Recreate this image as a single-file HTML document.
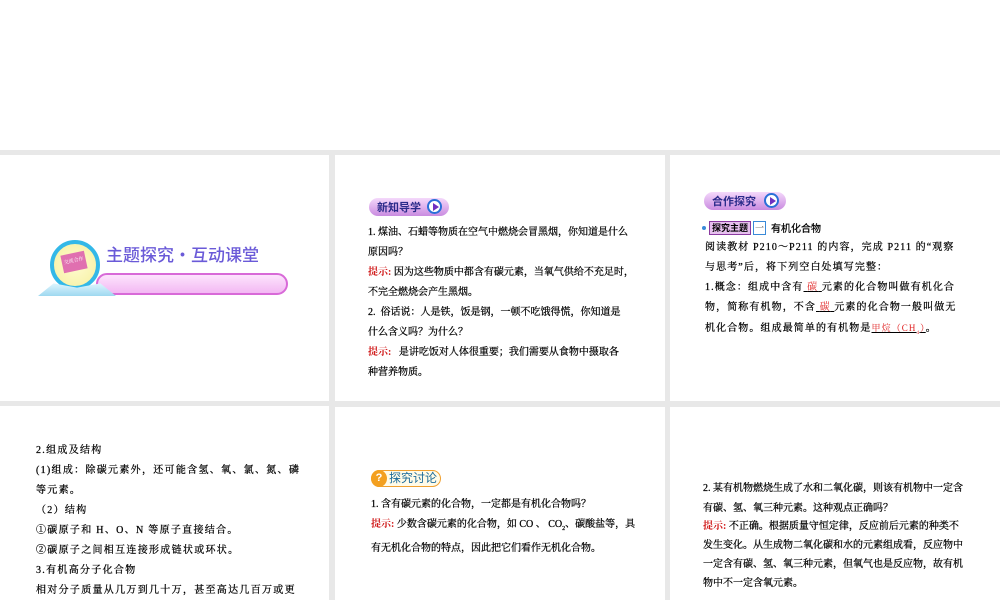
<!DOCTYPE html>
<html><head><meta charset="utf-8"><style>
*{margin:0;padding:0;box-sizing:border-box}
body{width:1000px;height:600px;overflow:hidden;background:#fff;font-family:"Liberation Serif","Noto Serif CJK SC","Noto Sans CJK SC",serif;color:#000;position:relative}
.band{position:absolute;left:0;top:150px;width:1000px;height:450px;background:#e8e8e8}
.s{position:absolute;background:#fff;overflow:hidden}
.t{position:absolute;font-size:10px;line-height:20px;white-space:nowrap;-webkit-text-stroke:0.25px #000}
.r{color:#d01818;font-weight:bold;-webkit-text-stroke:0}
.red{color:#e02020;-webkit-text-stroke:0}
.hdr{position:absolute;height:18px;border-radius:9px;background:linear-gradient(#f4d8fb,#c98be0);font-family:"Noto Sans CJK SC",sans-serif;font-weight:bold;font-size:11px;line-height:18px;color:#2a2a8a;padding-left:8px}
.play{position:absolute;width:15px;height:15px;border-radius:50%;border:2px solid #2a6fd8;background:#fff;top:1px}
.play:after{content:"";position:absolute;left:4px;top:2px;border-left:6px solid #7030c0;border-top:4px solid transparent;border-bottom:4px solid transparent}
</style></head><body>
<div class="band"></div>

<div class="s" style="left:0;top:155px;width:329px;height:246px">
  <div style="position:absolute;left:96px;top:118px;width:192px;height:22px;border-radius:11px;border:2px solid #d86ad8;background:linear-gradient(#fde4fd,#f3b8f3)"></div>
  <div style="position:absolute;left:50px;top:85px;width:50px;height:50px;border-radius:50%;border:4px solid #33b8e8;background:radial-gradient(#fffbd0,#f6f0a0)"></div>
  <div style="position:absolute;left:62px;top:98px;width:24px;height:18px;background:#e070b0;transform:rotate(-12deg);font-size:5px;color:#fff;text-align:center;line-height:18px">交流合作</div>
  <div style="position:absolute;left:38px;top:127px;width:78px;height:14px;background:linear-gradient(#e6f8ff,#9ed8f0);clip-path:polygon(0 100%,20% 10%,50% 40%,80% 10%,100% 100%)"></div>
  <div style="position:absolute;left:106px;top:86px;font-family:'Noto Sans CJK SC',sans-serif;font-size:17px;color:#6a5ad8;white-space:nowrap;font-weight:500">主题探究·互动课堂</div>
</div>

<div class="s" style="left:335px;top:155px;width:330px;height:246px">
  <div class="hdr" style="left:34px;top:43px;width:80px">新知导学<span class="play" style="left:58px"></span></div>
  <div class="t" style="left:33px;top:68px">1. 煤油、石蜡等物质在空气中燃烧会冒黑烟，你知道是什么<br>原因吗？<br><span class="r">提示:</span> 因为这些物质中都含有碳元素，当氧气供给不充足时，<br>不完全燃烧会产生黑烟。<br>2.&nbsp; 俗话说：人是铁，饭是钢，一顿不吃饿得慌，你知道是<br>什么含义吗？为什么？<br><span class="r">提示:</span>&nbsp;&nbsp; 是讲吃饭对人体很重要；我们需要从食物中摄取各<br>种营养物质。</div>
</div>

<div class="s" style="left:670px;top:155px;width:330px;height:246px">
  <div class="hdr" style="left:34px;top:37px;width:82px">合作探究<span class="play" style="left:60px"></span></div>
  <div style="position:absolute;left:32px;top:71px;width:4px;height:4px;border-radius:50%;background:#3a8ad8"></div>
  <div style="position:absolute;left:39px;top:66px;width:42px;height:14px;background:#e6c0ee;border:1px solid #8a3aa0;font-size:9px;line-height:12px;font-weight:bold;text-align:center;font-family:'Noto Sans CJK SC',sans-serif">探究主题</div>
  <div style="position:absolute;left:83px;top:66px;width:13px;height:14px;border:1px solid #3a8ad8;font-size:9px;line-height:12px;text-align:center">一</div>
  <div class="t" style="left:101px;top:63px;font-family:'Noto Sans CJK SC',sans-serif">有机化合物</div>
  <div class="t" style="left:35px;top:83px;letter-spacing:1.1px">阅读教材 P210～P211 的内容，完成 P211 的“观察<br>与思考”后，将下列空白处填写完整：<br>1.概念：组成中含有<u>&nbsp;<span class="red">碳</span>&nbsp;</u>元素的化合物叫做有机化合<br>物，简称有机物，不含<u>&nbsp;<span class="red">碳</span>&nbsp;</u>元素的化合物一般叫做无<br>机化合物。组成最简单的有机物是<u><span class="red" style="font-size:9px">甲烷（CH<sub style="font-size:5px">4</sub>）</span></u>。</div>
</div>

<div class="s" style="left:0;top:406px;width:329px;height:194px">
  <div class="t" style="left:36px;top:35px;letter-spacing:1.3px">2.组成及结构<br>(1)组成：除碳元素外，还可能含氢、氧、氯、氮、磷<br>等元素。<br>（2）结构<br>①碳原子和 H、O、N 等原子直接结合。<br>②碳原子之间相互连接形成链状或环状。<br>3.有机高分子化合物<br>相对分子质量从几万到几十万，甚至高达几百万或更</div>
</div>

<div class="s" style="left:335px;top:407px;width:330px;height:193px">
  <div style="position:absolute;left:36px;top:63px;width:70px;height:17px;border-radius:9px;border:1px solid #f0a030;background:#fffbe8"></div>
  <div style="position:absolute;left:36px;top:63px;width:16px;height:17px;border-radius:50%;background:#f3a020;color:#fff;font-size:11px;font-weight:bold;text-align:center;line-height:17px;font-family:'Liberation Sans',sans-serif">?</div>
  <div class="t" style="left:54px;top:61px;font-family:'Noto Sans CJK SC',sans-serif;font-size:12px;color:#1a6a9a;-webkit-text-stroke:0">探究讨论</div>
  <div class="t" style="left:36px;top:88px">1. 含有碳元素的化合物，一定都是有机化合物吗？<br><span class="r">提示:</span> 少数含碳元素的化合物，如 CO 、 CO<sub style="font-size:6px">2</sub>、碳酸盐等，具<br>有无机化合物的特点，因此把它们看作无机化合物。</div>
</div>

<div class="s" style="left:670px;top:407px;width:330px;height:193px">
  <div class="t" style="left:33px;top:72px">2. 某有机物燃烧生成了水和二氧化碳，则该有机物中一定含<br>有碳、氢、氧三种元素。这种观点正确吗？</div>
  <div class="t" style="left:33px;top:110px;line-height:19px"><span class="r">提示:</span> 不正确。根据质量守恒定律，反应前后元素的种类不<br>发生变化。从生成物二氧化碳和水的元素组成看，反应物中<br>一定含有碳、氢、氧三种元素，但氧气也是反应物，故有机<br>物中不一定含氧元素。</div>
</div>
</body></html>
